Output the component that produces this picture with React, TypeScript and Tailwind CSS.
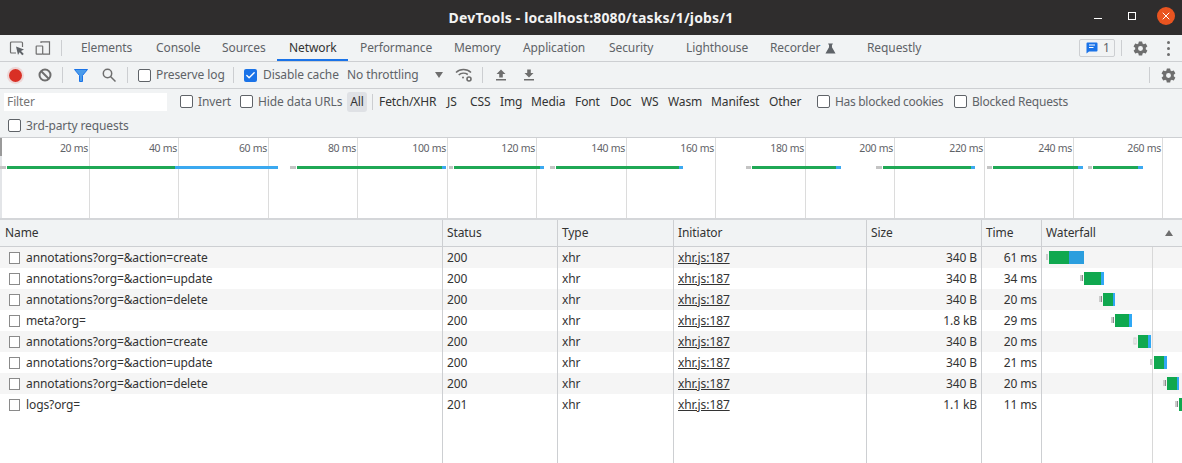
import { Check, X } from "lucide-react";

const tabs = [
  { name: "Elements", w: "w-[75px]" },
  { name: "Console", w: "w-[66px]" },
  { name: "Sources", w: "w-[67px]" },
  { name: "Network", w: "w-[71px]", active: true },
  { name: "Performance", w: "w-[94px]" },
  { name: "Memory", w: "w-[69px]" },
  { name: "Application", w: "w-[86px]" },
  { name: "Security", w: "w-[77px]" },
  { name: "Lighthouse", w: "w-[84px]" },
  { name: "Recorder", w: "w-[97px]", flask: true },
  { name: "Requestly", w: "w-[100px]" },
];

const types = [
  { name: "Fetch/XHR", w: "w-[68px]" },
  { name: "JS", w: "w-[23px]" },
  { name: "CSS", w: "w-[30px]" },
  { name: "Img", w: "w-[31px]" },
  { name: "Media", w: "w-[44px]" },
  { name: "Font", w: "w-[35px]" },
  { name: "Doc", w: "w-[31px]" },
  { name: "WS", w: "w-[27px]" },
  { name: "Wasm", w: "w-[43px]" },
  { name: "Manifest", w: "w-[58px]" },
  { name: "Other", w: "w-[48px]" },
];

const ticks = [
  { x: 89, label: "20 ms" },
  { x: 178, label: "40 ms" },
  { x: 268, label: "60 ms" },
  { x: 357, label: "80 ms" },
  { x: 447, label: "100 ms" },
  { x: 536, label: "120 ms" },
  { x: 626, label: "140 ms" },
  { x: 715, label: "160 ms" },
  { x: 805, label: "180 ms" },
  { x: 894, label: "200 ms" },
  { x: 984, label: "220 ms" },
  { x: 1073, label: "240 ms" },
  { x: 1162, label: "260 ms" },
];

// wait start, green start, blue start, blue end
const overviewBars = [
  [0, 7, 175, 278],
  [290, 297, 442, 446],
  [449, 454, 540, 544],
  [550, 556, 679, 683],
  [746, 752, 836, 841],
  [876, 883, 971, 975],
  [987, 993, 1078, 1083],
  [1088, 1093, 1138, 1143],
];

const requests = [
  { name: "annotations?org=&action=create", status: "200", size: "340 B", time: "61 ms", bar: [4, 7, 27, 42] },
  { name: "annotations?org=&action=update", status: "200", size: "340 B", time: "34 ms", bar: [38, 42, 59, 62] },
  { name: "annotations?org=&action=delete", status: "200", size: "340 B", time: "20 ms", bar: [57, 61, 71, 73] },
  { name: "meta?org=", status: "200", size: "1.8 kB", time: "29 ms", bar: [69, 73, 87, 90] },
  { name: "annotations?org=&action=create", status: "200", size: "340 B", time: "20 ms", bar: [92, 96, 106, 109], hollow: true },
  { name: "annotations?org=&action=update", status: "200", size: "340 B", time: "21 ms", bar: [108, 112, 122, 125] },
  { name: "annotations?org=&action=delete", status: "200", size: "340 B", time: "20 ms", bar: [121, 125, 135, 137] },
  { name: "logs?org=", status: "201", size: "1.1 kB", time: "11 ms", bar: [133, 137, 141, 141] },
];

function Box({ checked = false }: { checked?: boolean }) {
  return checked ? (
    <span className="w-[13px] h-[13px] rounded-[2px] bg-[#1a73e8] flex items-center justify-center shrink-0">
      <Check className="w-[11px] h-[11px] text-white" strokeWidth={3} />
    </span>
  ) : (
    <span className="block w-[13px] h-[13px] rounded-[2px] border border-[#5f6368] bg-white shrink-0" />
  );
}

function Sep({ className = "" }: { className?: string }) {
  return <div className={`w-px h-4 bg-[#ccced1] shrink-0 ${className}`} />;
}

function Gear({ className = "" }: { className?: string }) {
  return (
    <svg viewBox="0 0 24 24" className={`fill-[#6e6e6e] shrink-0 ${className}`}>
      <path d="M19.4 13c.04-.33.1-.66.1-1s-.06-.67-.1-1l2.1-1.65a.5.5 0 0 0 .12-.64l-2-3.46a.5.5 0 0 0-.6-.22l-2.5 1a7.3 7.3 0 0 0-1.7-1l-.37-2.65A.5.5 0 0 0 14 2h-4a.5.5 0 0 0-.49.42L9.13 5.07a7.7 7.7 0 0 0-1.7 1l-2.48-1a.5.5 0 0 0-.6.22l-2 3.46a.5.5 0 0 0 .12.64L4.57 11c-.04.33-.07.66-.07 1s.03.67.07 1l-2.1 1.65a.5.5 0 0 0-.13.64l2 3.46c.12.22.38.3.6.22l2.49-1c.52.4 1.08.73 1.7 1l.37 2.65c.04.24.25.42.49.42h4c.24 0 .45-.18.49-.42l.37-2.65a7.7 7.7 0 0 0 1.7-1l2.49 1c.22.08.48 0 .6-.22l2-3.46a.5.5 0 0 0-.12-.64L19.4 13ZM12 15.5a3.5 3.5 0 1 1 0-7 3.5 3.5 0 0 1 0 7Z" />
    </svg>
  );
}

export default function App() {
  return (
    <div className="w-[1182px] h-[463px] overflow-hidden flex flex-col bg-white text-[12px] text-[#333] font-['Noto_Sans',sans-serif] tracking-[-0.1px]">
      {/* Title bar */}
      <div className="h-[35px] shrink-0 bg-[#2f2d2d] flex items-center relative">
        <div className="flex-1 text-center text-[14px] font-bold text-[#f3f3f3] tracking-[0.15px]">
          DevTools - localhost:8080/tasks/1/jobs/1
        </div>
        <div className="absolute right-[7px] top-[7px] h-[18px] flex items-center">
          <span className="w-[8px] h-px bg-white mr-[26px] mt-[4px]" />
          <span className="w-[8px] h-[8px] border border-white mr-[21px]" />
          <span className="w-[18px] h-[18px] rounded-full bg-[#e95420] flex items-center justify-center">
            <X className="w-[12px] h-[12px] text-white" strokeWidth={2} />
          </span>
        </div>
      </div>

      {/* Tabs */}
      <div className="h-[27px] shrink-0 bg-[#f1f3f4] border-b border-[#cdcfd2] flex items-center">
        <svg viewBox="0 0 16 16" className="w-4 h-4 ml-[9px] shrink-0 fill-none">
          <path d="M7 13H2.5A1 1 0 0 1 1.5 12V3A1 1 0 0 1 2.5 2H12.5A1 1 0 0 1 13.5 3V7" stroke="#6e6e6e" strokeWidth="1.2" />
          <path d="M7 6.5L15 9.5L12 11L14.8 14L13.2 15.3L10.6 12.3L9 15Z" fill="#5f6368" />
        </svg>
        <svg viewBox="0 0 16 16" className="w-4 h-4 ml-[10px] shrink-0 fill-none stroke-[#6e6e6e]" strokeWidth="1.2">
          <path d="M6 3V1.8H14.5V14.2H8" />
          <rect x="1.2" y="6" width="6.5" height="8.2" rx="0.5" />
        </svg>
        <Sep className="ml-[10px]" />
        <div className="flex items-stretch h-full ml-[7px]">
          {tabs.map((t) => (
            <div
              key={t.name}
              className={`${t.w} shrink-0 flex items-center pl-[12px] whitespace-nowrap ${
                t.active ? "text-[#333] border-b-2 border-[#1a73e8] pt-[2px]" : "text-[#5f6368]"
              }`}
            >
              {t.name}
              {t.flask && (
                <svg viewBox="0 0 12 12" className="w-[11px] h-[11px] ml-[5px] fill-[#5f6368]">
                  <path d="M3.5 0.5H8.5V1.5H7.6V4.5L11.5 11.5H0.5L4.4 4.5V1.5H3.5Z" />
                </svg>
              )}
            </div>
          ))}
        </div>
        <div className="flex-1" />
        <div className="h-[18px] w-[36px] border border-[#cdcfd2] rounded-[2px] flex items-center pl-[6px] gap-[5px] text-[#5f6368] shrink-0">
          <svg viewBox="0 0 12 12" className="w-[12px] h-[12px] shrink-0">
            <path d="M1.5 0.5H10.5A1 1 0 0 1 11.5 1.5V8.5A1 1 0 0 1 10.5 9.5H3L0.5 11.5V1.5A1 1 0 0 1 1.5 0.5Z" fill="#1a73e8" />
            <path d="M3 3H9M3 5.5H7.5" stroke="#fff" strokeWidth="1" />
          </svg>
          1
        </div>
        <Sep className="ml-[6px]" />
        <Gear className="w-[17px] h-[17px] ml-[10px]" />
        <div className="flex flex-col gap-[3px] ml-[18px] mr-[12px] shrink-0">
          <span className="w-[3px] h-[3px] rounded-full bg-[#6e6e6e]" />
          <span className="w-[3px] h-[3px] rounded-full bg-[#6e6e6e]" />
          <span className="w-[3px] h-[3px] rounded-full bg-[#6e6e6e]" />
        </div>
      </div>

      {/* Network toolbar */}
      <div className="h-[27px] shrink-0 bg-[#f1f3f4] border-b border-[#cdcfd2] flex items-center">
        <span className="w-[13px] h-[13px] ml-[9px] rounded-full bg-[#d93025] ring-2 ring-[#d93025]/15 shrink-0" />
        <svg viewBox="0 0 14 14" className="w-[14px] h-[14px] ml-[16px] shrink-0 fill-none stroke-[#6e6e6e]" strokeWidth="2">
          <circle cx="7" cy="7" r="5.5" />
          <path d="M3 3L11 11" />
        </svg>
        <Sep className="ml-[10px]" />
        <svg viewBox="0 0 14 13" className="w-[14px] h-[13px] ml-[11px] shrink-0">
          <path d="M0.5 0.5H13.5L8.5 6.5V12.5H5.5V6.5Z" fill="#4a9bea" stroke="#1a73e8" strokeWidth="1" />
        </svg>
        <svg viewBox="0 0 14 14" className="w-[14px] h-[14px] ml-[14px] shrink-0 fill-none stroke-[#6e6e6e]" strokeWidth="1.5">
          <circle cx="5.5" cy="5.5" r="4.2" />
          <path d="M8.5 8.5L13.5 13.5" />
        </svg>
        <Sep className="ml-[11px]" />
        <div className="ml-[10px]"><Box /></div>
        <span className="ml-[5px] w-[77px] text-[#5f6368] whitespace-nowrap">Preserve log</span>
        <Sep />
        <div className="ml-[10px]"><Box checked /></div>
        <span className="ml-[6px] w-[84px] text-[#5f6368] whitespace-nowrap">Disable cache</span>
        <span className="w-[88px] text-[#5f6368] whitespace-nowrap">No throttling</span>
        <span className="w-0 h-0 border-x-[4px] border-x-transparent border-t-[6px] border-t-[#6e6e6e] shrink-0" />
        <svg viewBox="0 0 18 16" className="w-[18px] h-[16px] ml-[12px] shrink-0 fill-none stroke-[#6e6e6e]" strokeWidth="1.5">
          <path d="M1 5.5C5 1.5 12 1.5 16 5.5M3.7 8C6 6 10 5.8 12.8 7.5" />
          <circle cx="8" cy="10.5" r="1" fill="#6e6e6e" stroke="none" />
          <circle cx="14" cy="12" r="2" strokeWidth="1.6" />
        </svg>
        <Sep className="ml-[9px]" />
        <svg viewBox="0 0 12 12" className="w-[12px] h-[12px] ml-[12px] shrink-0 fill-[#6e6e6e]">
          <path d="M6 0.5L10.5 5H7.8V8.5H4.2V5H1.5ZM1 10H11V11.5H1Z" />
        </svg>
        <svg viewBox="0 0 12 12" className="w-[12px] h-[12px] ml-[16px] shrink-0 fill-[#6e6e6e]">
          <path d="M4.2 0.5H7.8V4H10.5L6 8.5L1.5 4H4.2ZM1 10H11V11.5H1Z" />
        </svg>
        <div className="flex-1" />
        <Sep />
        <Gear className="w-[17px] h-[17px] ml-[10px] mr-[5px]" />
      </div>

      {/* Filter bar */}
      <div className="h-[49px] shrink-0 bg-[#f1f3f4] border-b border-[#cdcfd2]">
        <div className="h-[25px] flex items-center">
          <div className="w-[163px] h-[18px] ml-[4px] bg-white flex items-center pl-[3px] text-[#757575] shrink-0">Filter</div>
          <div className="ml-[13px]"><Box /></div>
          <span className="ml-[5px] w-[42px] text-[#5f6368] whitespace-nowrap">Invert</span>
          <Box />
          <span className="ml-[5px] w-[89px] text-[#5f6368] whitespace-nowrap">Hide data URLs</span>
          <span className="w-[20px] h-[20px] rounded-[3px] bg-[#dfe1e5] flex items-center justify-center text-[#333] shrink-0">All</span>
          <Sep className="ml-[5px] mr-[6px]" />
          {types.map((t) => (
            <span key={t.name} className={`${t.w} shrink-0 whitespace-nowrap text-[#333]`}>{t.name}</span>
          ))}
          <Box />
          <span className="ml-[5px] w-[119px] text-[#5f6368] whitespace-nowrap tracking-[-0.3px]">Has blocked cookies</span>
          <Box />
          <span className="ml-[5px] text-[#5f6368] whitespace-nowrap tracking-[-0.2px]">Blocked Requests</span>
        </div>
        <div className="h-[23px] flex items-center pl-[8px]">
          <Box />
          <span className="ml-[5px] text-[#5f6368] whitespace-nowrap">3rd-party requests</span>
        </div>
      </div>

      {/* Timeline overview */}
      <div className="relative h-[80px] shrink-0 bg-white overflow-hidden">
        {ticks.map((t) => (
          <div
            key={t.x}
            className="absolute top-0 h-full border-r border-[#dcdcdc] text-right pr-[1px] pt-[2px] text-[10.5px] tracking-[-0.3px] text-[#5f6368] whitespace-nowrap leading-[16px]"
            style={{ left: t.x - 79, width: 80 }}
          >
            {t.label}
          </div>
        ))}
        <svg className="absolute left-0 top-0" width="1182" height="80">
          <rect x={0} y={0} width={2} height={80} fill="#e3e5e8" />
          <rect x={0} y={0} width={2} height={18} fill="#9a9a9a" />
          {overviewBars.map(([a, b, c, d]) => (
            <g key={a}>
              <rect x={a} y={28} width={b - a - 1} height={3} fill="#c4c4c4" />
              <rect x={b} y={28} width={c - b} height={3} fill="#1fa855" />
              <rect x={c} y={28} width={d - c} height={3} fill="#3ba9f0" />
            </g>
          ))}
        </svg>
      </div>

      {/* Requests table */}
      <div className="flex-1 min-h-0 border-t-2 border-[#d4d6d9] relative">
        <div className="h-[27px] bg-[#f1f3f4] border-b border-[#cdcfd2] grid grid-cols-[443px_115px_116px_193px_115px_60px_140px] text-[#333]">
          {["Name", "Status", "Type", "Initiator", "Size", "Time"].map((h, i) => (
            <div key={h} className={`border-r border-[#cdcfd2] flex items-center ${i === 0 ? "pl-[5px]" : "pl-[4px]"}`}>{h}</div>
          ))}
          <div className="pl-[4px] flex items-center justify-between pr-[9px]">
            Waterfall
            <span className="w-0 h-0 border-x-[4px] border-x-transparent border-b-[6px] border-b-[#6e6e6e]" />
          </div>
        </div>
        {requests.map((r, i) => (
          <div
            key={i}
            className={`h-[21px] grid grid-cols-[443px_115px_116px_193px_115px_60px_140px] ${i % 2 === 0 ? "bg-[#f5f5f5]" : "bg-white"}`}
          >
            <div className="border-r border-[#cdcfd2] pl-[9px] flex items-center whitespace-nowrap">
              <span className="w-[11px] h-[12px] border border-[#8a8a8a] bg-white mr-[6px] shrink-0" />
              {r.name}
            </div>
            <div className="border-r border-[#cdcfd2] pl-[4px] flex items-center">{r.status}</div>
            <div className="border-r border-[#cdcfd2] pl-[4px] flex items-center">xhr</div>
            <div className="border-r border-[#cdcfd2] pl-[4px] flex items-center underline">xhr.js:187</div>
            <div className="border-r border-[#cdcfd2] pr-[4px] flex items-center justify-end">{r.size}</div>
            <div className="border-r border-[#cdcfd2] pr-[4px] flex items-center justify-end">{r.time}</div>
            <svg width="140" height="21" className="block">
              <rect x={r.bar[0]} y={7} width={2} height={6} fill={r.hollow ? "#fff" : "#ccc"} stroke={r.hollow ? "#ccc" : "none"} />
              {!r.hollow && i > 0 && <rect x={r.bar[0] + 2} y={7} width={1} height={6} fill="#888" />}
              <rect x={r.bar[1]} y={4} width={r.bar[2] - r.bar[1]} height={13} fill="#10a84f" />
              <rect x={r.bar[2]} y={4} width={r.bar[3] - r.bar[2]} height={13} fill={i === 0 ? "#2b9ede" : "#2fa8f5"} />
            </svg>
          </div>
        ))}
        {/* column rules continue below the last row */}
        <div className="absolute inset-x-0 top-[27px] bottom-0 pointer-events-none grid grid-cols-[443px_115px_116px_193px_115px_60px_140px]">
          {[0, 1, 2, 3, 4, 5].map((c) => (
            <div key={c} className="border-r border-[#cdcfd2]" />
          ))}
          <div className="relative">
            <div className="absolute left-[110px] top-0 bottom-0 w-px bg-[#d8d8d8]" />
          </div>
        </div>
      </div>
    </div>
  );
}
